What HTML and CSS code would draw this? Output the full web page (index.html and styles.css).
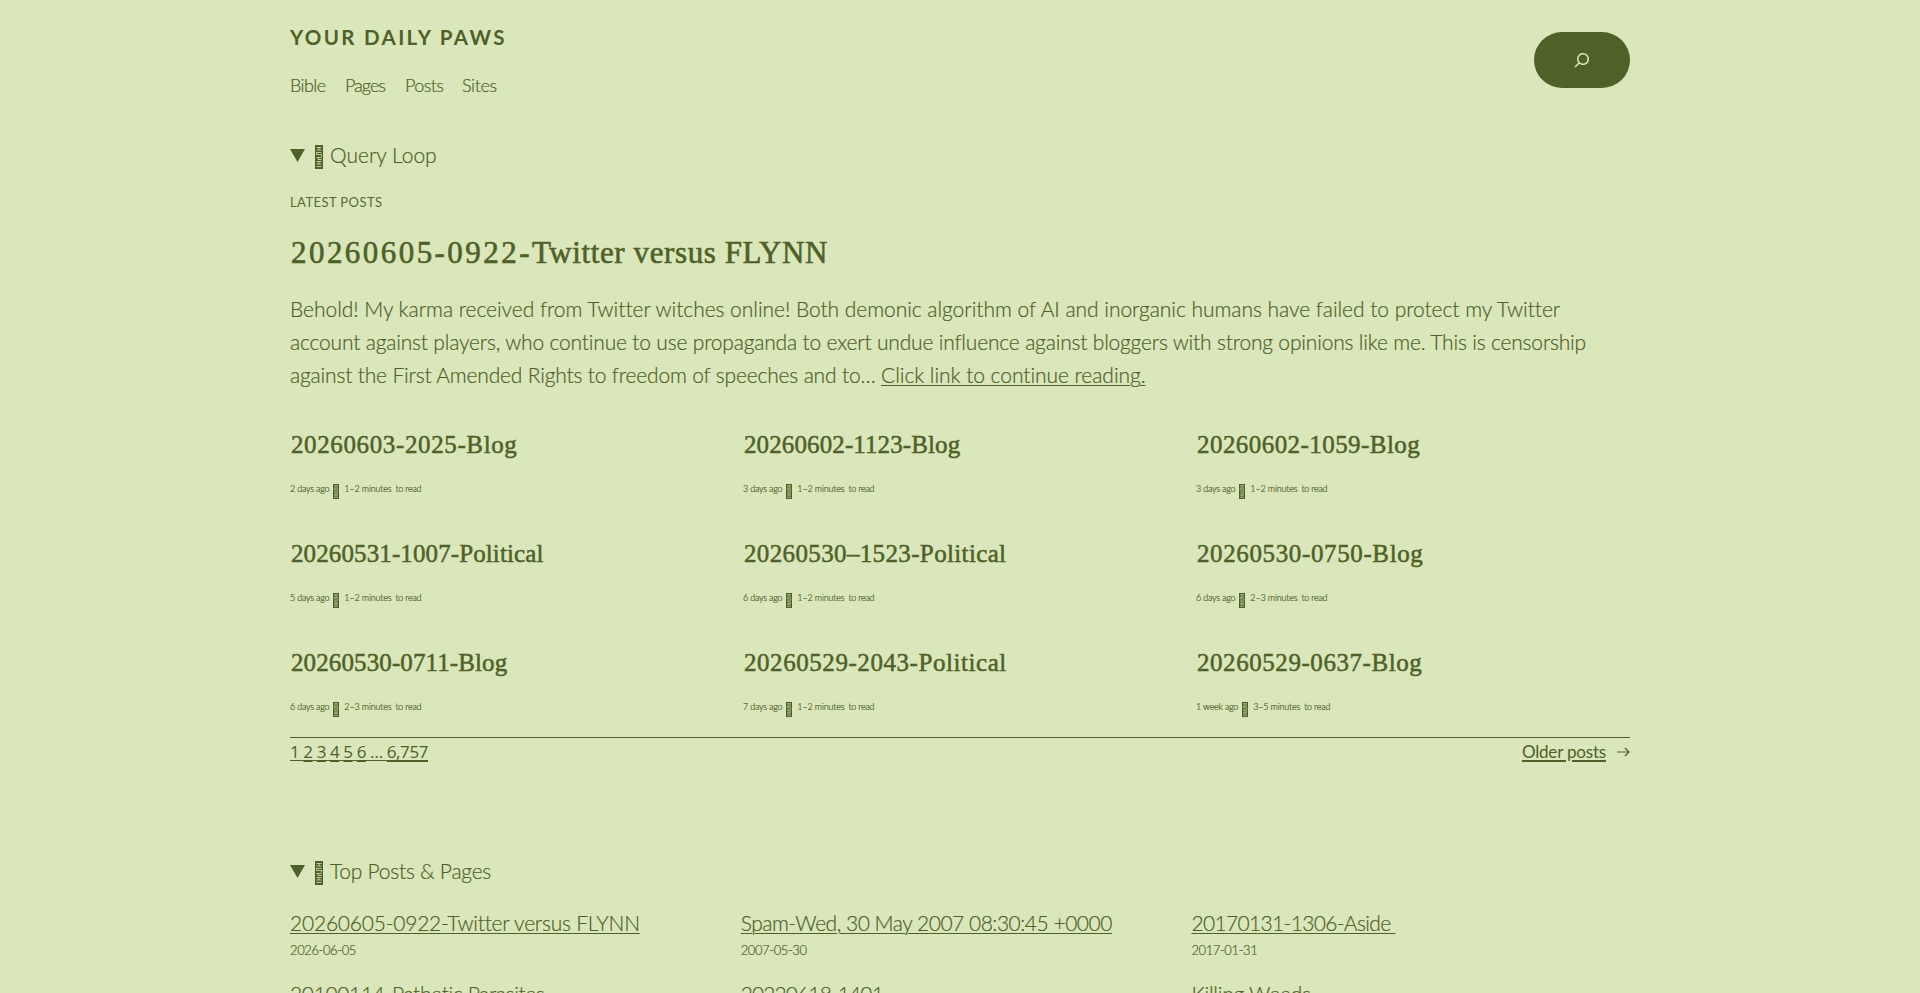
FILE: index.html
```html
<!DOCTYPE html>
<html lang="en">
<head>
<meta charset="utf-8">
<title>Your Daily Paws</title>
<link rel="stylesheet" href="styles.css">
</head>
<body>
<svg class="defs" width="0" height="0">
  <symbol id="box" viewBox="0 0 8 24" preserveAspectRatio="none">
    <rect x="0" y="0" width="8" height="24" fill="#4f6128"/>
    <path d="M1.500 2.500h5M1.500 5h5M4 2.500V5M1.500 7.500h5M1.500 9.500h5M1.500 7.500v2M6.500 9.500v2M1.500 12.500h5M3 12.500v2h3.500M1.500 16.500h5M1.500 19h5M4 16.500V19M1.500 21.500h5" fill="none" stroke="#dae7ba" stroke-width=".8"/>
  </symbol>
</svg>
<div class="page">
  <header class="header">
    <div>
      <h1 class="site-title">YOUR DAILY PAWS</h1>
      <nav class="nav"><a class="n1">Bible</a><a class="n2">Pages</a><a class="n3">Posts</a><a class="n4">Sites</a></nav>
    </div>
    <button class="search" aria-label="Search">
      <svg width="24" height="24" viewBox="0 0 24 24" fill="#dae7ba"><path d="M13 5c-3.300 0-6 2.700-6 6 0 1.400.5 2.700 1.300 3.700l-3.800 3.800 1.100 1.100 3.800-3.800c1 .8 2.300 1.300 3.700 1.300 3.300 0 6-2.700 6-6S16.300 5 13 5zm0 10.500c-2.500 0-4.500-2-4.500-4.500s2-4.500 4.500-4.500 4.500 2 4.500 4.500-2 4.500-4.500 4.500z"/></svg>
    </button>
  </header>

  <section class="section">
    <div class="summary"><svg class="tri" viewBox="0 0 14 12" preserveAspectRatio="none"><path d="M0 0h14L7 12z"/></svg><svg class="box"><use href="#box"/></svg><span>Query Loop</span></div>
    <p class="eyebrow">LATEST POSTS</p>
    <h2 class="lead-title"><span class="stamp">20260605-0922-</span>Twitter versus FLYNN</h2>
    <p class="excerpt"><span class="l1">Behold! My karma received from Twitter witches online! Both demonic algorithm of AI and inorganic humans have failed to protect my Twitter</span><br><span class="l2">account against players, who continue to use propaganda to exert undue influence against bloggers with strong opinions like me. This is censorship</span><br><span class="l3">against the First Amended Rights to freedom of speeches and to… </span><a class="more">Click link to continue reading.</a></p>

    <div class="cards">
      <article><h3 class="wide">20260603-2025-Blog</h3><p class="meta"><span>2 days ago</span><svg><use href="#box"/></svg><span class="mins">1–2 minutes</span><span>to read</span></p></article>
      <article><h3 class="tight">20260602-1123-Blog</h3><p class="meta"><span>3 days ago</span><svg><use href="#box"/></svg><span class="mins">1–2 minutes</span><span>to read</span></p></article>
      <article><h3 class="mid">20260602-1059-Blog</h3><p class="meta"><span>3 days ago</span><svg><use href="#box"/></svg><span class="mins">1–2 minutes</span><span>to read</span></p></article>
      <article><h3 class="tight">20260531-1007-Political</h3><p class="meta"><span>5 days ago</span><svg><use href="#box"/></svg><span class="mins">1–2 minutes</span><span>to read</span></p></article>
      <article><h3 class="semi">20260530–1523-Political</h3><p class="meta"><span>6 days ago</span><svg><use href="#box"/></svg><span class="mins">1–2 minutes</span><span>to read</span></p></article>
      <article><h3 class="wide">20260530-0750-Blog</h3><p class="meta"><span>6 days ago</span><svg><use href="#box"/></svg><span class="mins">2–3 minutes</span><span>to read</span></p></article>
      <article><h3 class="tight">20260530-0711-Blog</h3><p class="meta"><span>6 days ago</span><svg><use href="#box"/></svg><span class="mins">2–3 minutes</span><span>to read</span></p></article>
      <article><h3 class="semi2">20260529-2043-Political</h3><p class="meta"><span>7 days ago</span><svg><use href="#box"/></svg><span class="mins">1–2 minutes</span><span>to read</span></p></article>
      <article><h3 class="semi2">20260529-0637-Blog</h3><p class="meta"><span>1 week ago</span><svg><use href="#box"/></svg><span class="mins">3–5 minutes</span><span>to read</span></p></article>
    </div>

    <nav class="pagination">
      <div class="numbers">1 <a>2</a> <a>3</a> <a>4</a> <a>5</a> <a>6</a> … <a>6,757</a></div>
      <div class="older"><a>Older posts</a><svg width="13" height="10" viewBox="0 0 13 10"><path d="M0 5h12M8 1l4 4-4 4" fill="none" stroke="#4f6128" stroke-width="1.200"/></svg></div>
    </nav>
  </section>

  <section class="section top">
    <div class="summary"><svg class="tri" viewBox="0 0 14 12" preserveAspectRatio="none"><path d="M0 0h14L7 12z"/></svg><svg class="box"><use href="#box"/></svg><span class="tp">Top Posts &amp; Pages</span></div>
    <div class="links">
      <div><a class="k1">20260605-0922-Twitter versus FLYNN</a><time>2026-06-05</time></div>
      <div><a class="k2">Spam-Wed, 30 May 2007 08:30:45 +0000</a><time>2007-05-30</time></div>
      <div><a class="k3">20170131-1306-Aside&nbsp;</a><time>2017-01-31</time></div>
      <div><a class="k4">20100114-Pathetic Parasites</a></div>
      <div><a class="k5">20220618-1401</a></div>
      <div><a class="k1">Killing Weeds</a></div>
    </div>
  </section>
</div>
</body>
</html>
```
FILE: styles.css
```css
* { box-sizing: border-box; margin: 0; padding: 0; }
body {
  height: 993px;
  overflow: hidden;
  background: #dae7ba;
  color: #4f6128;
  font: 300 21px/33px Lato, sans-serif;
  font-variant-ligatures: none;
  -webkit-text-stroke: .2px #4f6128;
}
.defs { display: block; }
.page { width: 1340px; margin: 0 auto; padding-top: 22px; }

.header { display: flex; justify-content: space-between; align-items: flex-start; height: 75px; }
.site-title { font-size: 20.5px; font-weight: 700; line-height: 30px; letter-spacing: 2.350px; -webkit-text-stroke: 0; }
.nav { display: flex; margin-top: 21px; font-size: 18px; line-height: 24px; }
.nav a { width: 59px; letter-spacing: -.6px; }
.nav .n1 { width: 55px; }
.nav .n2 { width: 60px; letter-spacing: -1px; }
.nav .n3 { width: 57px; }
.nav .n4 { letter-spacing: -.4px; }
.search { display: flex; align-items: center; justify-content: center; width: 96px; height: 56px; margin-top: 10px; border: 0; border-radius: 28px; background: #4f6128; }

.section { margin-top: 41px; }
.summary { display: flex; align-items: center; height: 33px; }
.tri { width: 15px; height: 13px; margin: 1px 10px 0 0; fill: #4f6128; }
.box { width: 8px; height: 24px; margin: 5px 7px 0 0; }
.tp { letter-spacing: -.25px; }
.eyebrow { margin-top: 21px; font-size: 13px; line-height: 20px; letter-spacing: .42px; font-weight: 400; -webkit-text-stroke: 0; opacity: .92; }
.lead-title { margin-top: 21px; padding-left: 1px; font: 400 31px/40px "Liberation Serif", serif; letter-spacing: .6px; -webkit-text-stroke: .6px #4f6128; }
.stamp { letter-spacing: 2.450px; }
.excerpt { margin-top: 19px; white-space: nowrap; }
.l1 { letter-spacing: -.045px; }
.l2 { letter-spacing: -.182px; }
.l3 { letter-spacing: -.173px; }
.more { letter-spacing: -.05px; }
.more, .links a, .numbers, .numbers a, .older a { text-decoration: underline; text-decoration-thickness: 1px; text-underline-offset: 2px; }

.cards { display: grid; grid-template-columns: repeat(3, 453px); row-gap: 38px; margin-top: 37px; }
.cards h3 { padding-left: 1px; font: 400 25px/34px "Liberation Serif", serif; -webkit-text-stroke: .5px #4f6128; white-space: nowrap; }
.wide { letter-spacing: .62px; }
.semi2 { letter-spacing: .56px; }
.mid { letter-spacing: .44px; }
.semi { letter-spacing: .36px; }
.tight { letter-spacing: .11px; }
.meta { display: flex; align-items: center; height: 20px; margin-top: 17px; font-size: 9px; line-height: 20px; letter-spacing: -.22px; }
.meta svg { width: 6px; height: 15px; margin: 4px 5px 0 4px; }
.mins { margin-right: 4px; letter-spacing: -.16px; }

.pagination { display: flex; justify-content: space-between; height: 27px; margin-top: 20px; padding-top: 2px; border-top: 1px solid #4f6128; line-height: 24px; font-size: 17px; -webkit-text-stroke: 0; }
.numbers { font-family: "Open Sans", sans-serif; font-weight: 400; letter-spacing: -.41px; }
.numbers a, .older a { text-decoration-thickness: 2px; }
.older { display: flex; align-items: center; gap: 11px; font-weight: 400; letter-spacing: -.19px; }

.top { margin-top: 90px; }
.links { display: grid; grid-template-columns: repeat(3, 450.700px); row-gap: 17px; margin-top: 19px; white-space: nowrap; }
.links a { display: inline-block; height: 33px; }
.links time { display: block; margin-top: 1px; font-size: 13px; line-height: 20px; letter-spacing: -.4px; }
.k1 { letter-spacing: -.22px; }
.k2 { letter-spacing: -.49px; }
.k3 { letter-spacing: -.66px; }
.k4 { letter-spacing: -.36px; }
.k5 { letter-spacing: -.9px; }
```
